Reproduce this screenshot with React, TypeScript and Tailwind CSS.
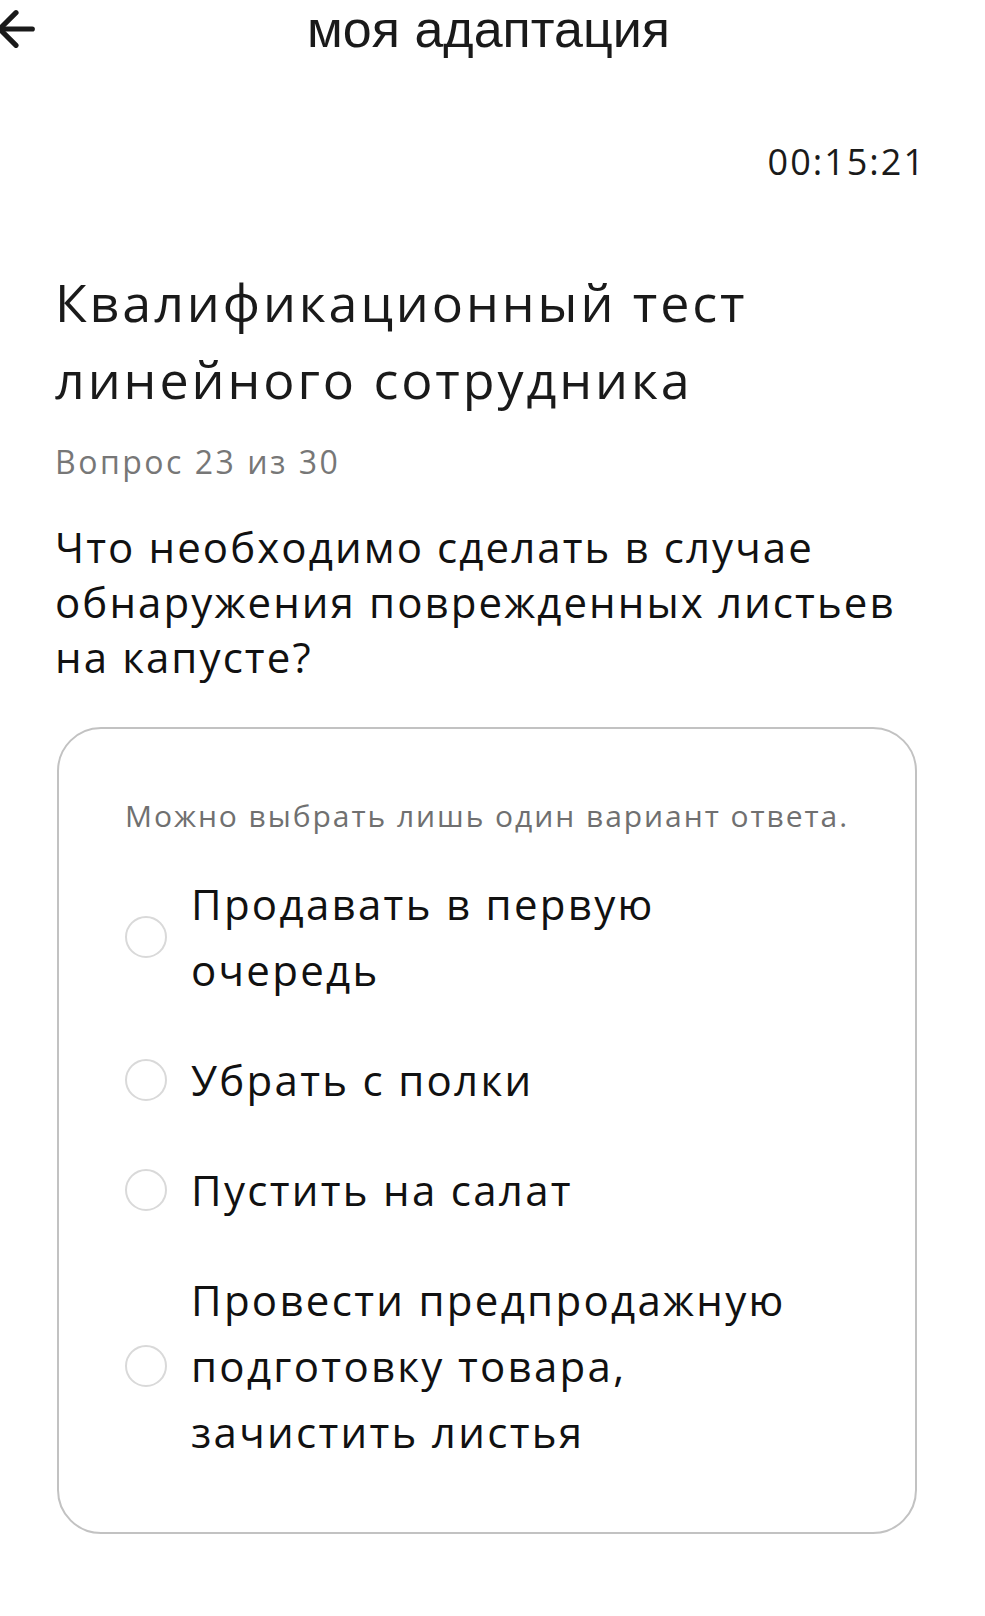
import { ArrowLeft } from 'lucide-react';

const options = [
  'Продавать в первую очередь',
  'Убрать с полки',
  'Пустить на салат',
  'Провести предпродажную подготовку товара, зачистить листья',
];

export default function App() {
  return (
    <div className="w-[985px] min-h-[1616px] bg-white text-[#1a1a1a] font-['Open_Sans',sans-serif]">
      <header className="relative h-[60px] flex items-center justify-center">
        <ArrowLeft className="absolute left-[-12px] top-[0px] w-[56px] h-[58px] text-[#1a1a1a]" strokeWidth={2.2} />
        <h1 className="font-['Liberation_Sans',sans-serif] text-[52px] leading-none -mt-[2px] ml-[-8px]">моя адаптация</h1>
      </header>

      <div className="px-[55px]">
        <div className="flex justify-end pr-[4px] mt-[84px] text-[36px] leading-none tracking-[2px]">00:15:21</div>

        <h2 className="mt-[83px] text-[52px] leading-[77px] tracking-[2.9px]">
          Квалификационный тест линейного сотрудника
        </h2>

        <p className="mt-[29px] text-[32px] leading-none tracking-[2.5px] text-[#777777]">Вопрос 23 из 30</p>

        <p className="mt-[41px] text-[42px] leading-[55px] tracking-[2.1px] font-medium text-[#111111]">
          Что необходимо сделать в случае обнаружения поврежденных листьев на капусте?
        </p>

        <div className="mt-[43px] ml-[2px] w-[860px] border-2 border-[#c2c2c2] rounded-[44px] pl-[66px] pr-[90px] pt-[72px] pb-[67px]">
          <p className="text-[30px] leading-none tracking-[1.95px] text-[#707070] whitespace-nowrap">Можно выбрать лишь один вариант ответа.</p>
          <div className="mt-[40px] flex flex-col gap-[44px]">
            {options.map((o) => (
              <label key={o} className="flex items-center gap-[24px]">
                <span className="shrink-0 w-[42px] h-[42px] rounded-full border-2 border-[#d9d9d9]" />
                <span className="text-[42px] leading-[66px] tracking-[2.3px] font-medium text-[#111111]">{o}</span>
              </label>
            ))}
          </div>
        </div>
      </div>
    </div>
  );
}
